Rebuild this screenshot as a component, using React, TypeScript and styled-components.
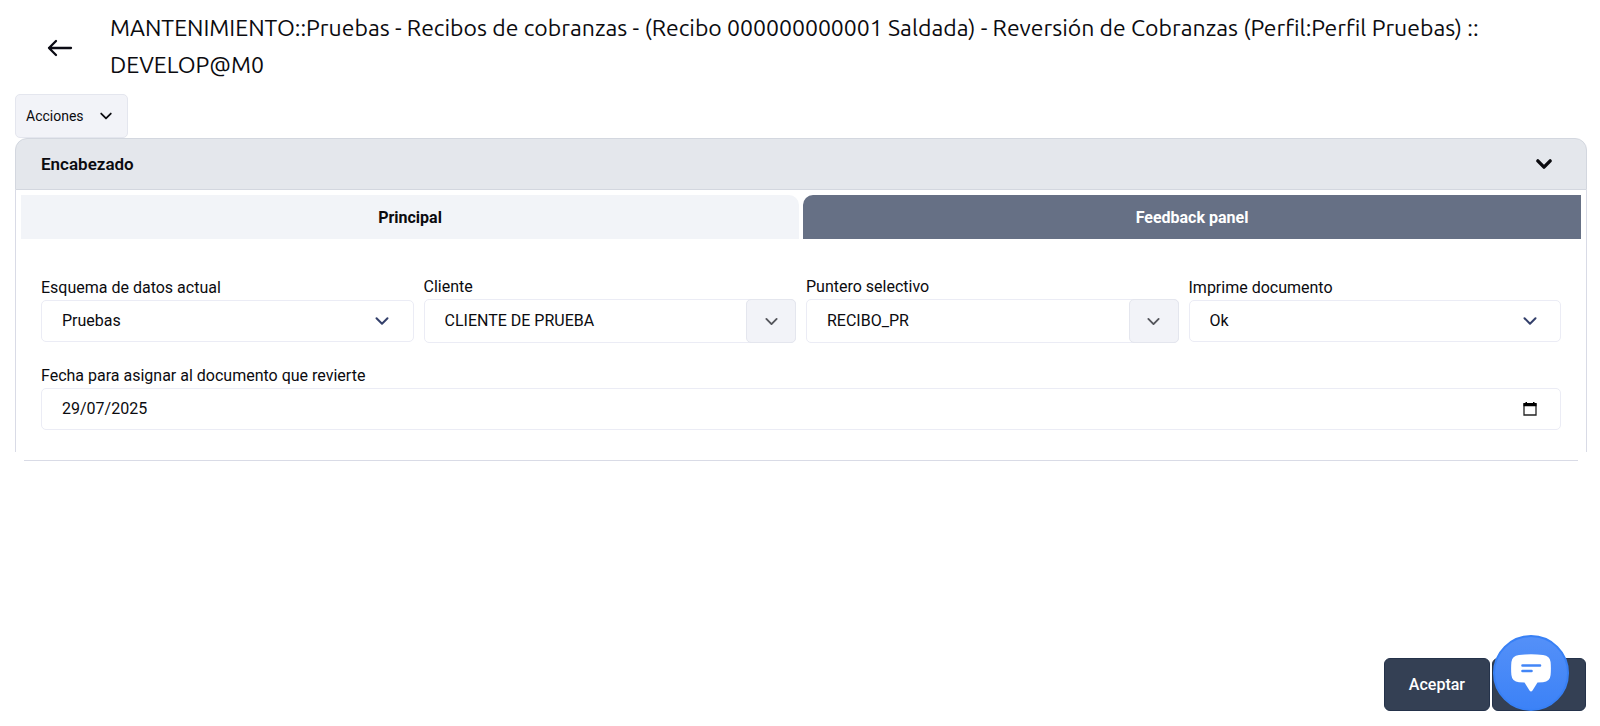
import React, { useState } from "react";
import styled, { createGlobalStyle } from "styled-components";

const GlobalStyle = createGlobalStyle`
  *, *::before, *::after { box-sizing: border-box; }
  body {
    margin: 0;
    background: #ffffff;
    color: #0b0b0f;
    font-family: Roboto, "Liberation Sans", sans-serif;
    font-size: 16px;
    line-height: 24px;
  }
  button, input, select { font: inherit; color: inherit; }
  button { cursor: pointer; }
  svg { display: block; }
`;

const Page = styled.div`
  display: flex;
  flex-direction: column;
  min-height: 100vh;
  padding: 9px 13px 15px 15px;
`;

const Header = styled.header`
  display: flex;
  align-items: center;
  gap: 32px;
  padding: 0 16px 0 27px;
`;

const BackButton = styled.button`
  flex: none;
  width: 36px;
  height: 36px;
  padding: 3px 3px 0;
  border: 0;
  background: transparent;
`;

const Title = styled.h1`
  margin: 0;
  font-family: Ubuntu, "Noto Sans", sans-serif;
  font-size: 23px;
  font-weight: 400;
  line-height: 37px;
`;

const ActionsButton = styled.button`
  display: flex;
  align-items: center;
  align-self: flex-start;
  gap: 15px;
  height: 44px;
  margin-top: 11px;
  padding: 0 14px 0 10px;
  border: 1px solid #e4e6ee;
  border-radius: 5px;
  background: #f2f3f8;
  font-size: 14px;
`;

const PanelHeader = styled.button`
  display: flex;
  align-items: center;
  justify-content: space-between;
  width: 100%;
  height: 52px;
  padding: 0 33px 0 25px;
  border: 1px solid #d3d7df;
  border-radius: 12px 12px 0 0;
  background: #e4e7ec;
  font-size: 17px;
  font-weight: 600;
`;

const PanelBody = styled.div`
  padding: 5px 5px 22px;
  border: solid #d9dbe6;
  border-width: 0 1px;
`;

const PanelEdge = styled.div`
  height: 9px;
  margin: 0 9px;
  border-bottom: 1px solid #d9dbe6;
`;

const TabList = styled.div`
  display: grid;
  grid-template-columns: 1fr 1fr;
  gap: 4px;
`;

const Tab = styled.button<{ $dark?: boolean }>`
  height: 44px;
  padding: 1px 0 0;
  border: 0;
  border-radius: ${(p) => (p.$dark ? "10px 0 0 0" : "0 10px 0 0")};
  background: ${(p) => (p.$dark ? "#667085" : "#f2f4f8")};
  color: ${(p) => (p.$dark ? "#ffffff" : "#0b0b0f")};
  font-weight: 700;
`;

const Fields = styled.div`
  display: grid;
  grid-template-columns: repeat(4, minmax(0, 1fr));
  align-items: center;
  gap: 21px 10px;
  padding: 36px 20px 0;
`;

const Field = styled.div<{ $wide?: boolean }>`
  display: flex;
  flex-direction: column;
  grid-column: ${(p) => (p.$wide ? "1 / -1" : "auto")};
`;

const Control = styled.div<{ $combo?: boolean }>`
  display: grid;
  grid-template-columns: minmax(0, 1fr) ${(p) => (p.$combo ? "49px" : "61px")};
  height: ${(p) => (p.$combo ? 44 : 42)}px;
  border: 1px solid #ebecf5;
  border-radius: 5px;
  background: #ffffff;
`;

const TextInput = styled.input`
  width: 100%;
  padding: 0 0 1px 20px;
  border: 0;
  outline: 0;
  background: transparent;
`;

const Select = styled.select`
  grid-area: 1 / 1 / 2 / 3;
  width: 100%;
  padding: 0 20px 1px;
  border: 0;
  outline: 0;
  appearance: none;
  background: transparent;
`;

const SelectMark = styled.span`
  display: grid;
  grid-area: 1 / 2 / 2 / 3;
  place-items: center;
  color: #34406b;
  pointer-events: none;
`;

const ComboButton = styled.button`
  display: grid;
  place-items: center;
  margin: -1px -1px -1px 0;
  border: 1px solid #e4e6ee;
  border-radius: 5px;
  background: #f2f3f8;
  color: #55565c;
`;

const DateButton = styled.button`
  display: grid;
  place-items: center;
  border: 0;
  background: transparent;
`;

const Footer = styled.footer`
  display: flex;
  justify-content: flex-end;
  gap: 2px;
  margin-top: auto;
  padding: 24px 1px 0 0;
`;

const FooterButton = styled.button`
  min-width: 94px;
  height: 53px;
  padding: 0 24px;
  border: 1px solid #24324a;
  border-radius: 6px;
  background: #344054;
  color: #ffffff;
  font-weight: 500;
`;

const ChatButton = styled.button`
  position: fixed;
  right: 31px;
  bottom: 15px;
  display: grid;
  place-items: center;
  width: 76px;
  height: 76px;
  padding: 0;
  border: 2px solid #3880f5;
  border-radius: 50%;
  background: linear-gradient(#5490f8, #3c82f7);
`;

function Chevron({ size, weight = 2 }: { size: number; weight?: number }) {
  return (
    <svg width={size} height={size} viewBox="0 0 16 16" fill="none" stroke="currentColor"
      strokeWidth={weight} strokeLinecap="round" strokeLinejoin="round" aria-hidden="true">
      <path d="M2.5 5.2 8 10.8l5.5-5.6" />
    </svg>
  );
}

function SelectField({ id, label, value }: { id: string; label: string; value: string }) {
  return (
    <Field>
      <label htmlFor={id}>{label}</label>
      <Control>
        <Select id={id} defaultValue={value}>
          <option>{value}</option>
        </Select>
        <SelectMark><Chevron size={16} /></SelectMark>
      </Control>
    </Field>
  );
}

function ComboField({ id, label, value }: { id: string; label: string; value: string }) {
  return (
    <Field>
      <label htmlFor={id}>{label}</label>
      <Control $combo>
        <TextInput id={id} defaultValue={value} />
        <ComboButton type="button" aria-label={label}><Chevron size={15} /></ComboButton>
      </Control>
    </Field>
  );
}

export default function App() {
  const [open, setOpen] = useState(true);

  return (
    <>
      <GlobalStyle />
      <Page>
        <Header>
          <BackButton type="button" aria-label="Volver">
            <svg width="30" height="30" viewBox="0 0 30 30" fill="none" stroke="#0b0b14"
              strokeWidth="2.3" strokeLinecap="round" strokeLinejoin="round">
              <path d="M26 15H4M11 8l-7 7 7 7" />
            </svg>
          </BackButton>
          <Title>
            MANTENIMIENTO::Pruebas - Recibos de cobranzas - (Recibo 000000000001 Saldada) - Reversión de
            Cobranzas (Perfil:Perfil Pruebas) :: DEVELOP@M0
          </Title>
        </Header>

        <ActionsButton type="button">
          Acciones
          <Chevron size={14} />
        </ActionsButton>

        <section>
          <PanelHeader type="button" aria-expanded={open} onClick={() => setOpen(!open)}>
            Encabezado
            <Chevron size={18} weight={3} />
          </PanelHeader>
          {open && (
            <PanelBody>
              <TabList role="tablist">
                <Tab type="button" role="tab" aria-selected="true">Principal</Tab>
                <Tab type="button" role="tab" aria-selected="false" $dark>Feedback panel</Tab>
              </TabList>
              <Fields>
                <SelectField id="esquema" label="Esquema de datos actual" value="Pruebas" />
                <ComboField id="cliente" label="Cliente" value="CLIENTE DE PRUEBA" />
                <ComboField id="puntero" label="Puntero selectivo" value="RECIBO_PR" />
                <SelectField id="imprime" label="Imprime documento" value="Ok" />
                <Field $wide>
                  <label htmlFor="fecha">Fecha para asignar al documento que revierte</label>
                  <Control>
                    <TextInput id="fecha" inputMode="numeric" defaultValue="29/07/2025" />
                    <DateButton type="button" aria-label="Calendario">
                      <svg width="14" height="16" viewBox="0 0 14 16" aria-hidden="true">
                        <path d="M1 3h12v11H1z" fill="none" stroke="#222" strokeWidth="1.3" />
                        <path d="M0.5 2h13v3.2H0.5zM2.5 1h1.5v2H2.5zM10 1h1.5v2H10z" fill="#000" />
                      </svg>
                    </DateButton>
                  </Control>
                </Field>
              </Fields>
            </PanelBody>
          )}
          <PanelEdge />
        </section>

        <Footer>
          <FooterButton type="button">Aceptar</FooterButton>
          <FooterButton type="button" aria-label="Cerrar" />
        </Footer>

        <ChatButton type="button" aria-label="Chat">
          <svg width="40" height="40" viewBox="0 0 40 40" aria-hidden="true">
            <path d="M8 2Q20 0.6 32 2Q39 2.8 39.6 9Q40.2 15.5 39.6 22Q39 28.6 32 29.2L26.5 29.6L21.5 37.5Q20 39.4 18.5 37.5L13.5 29.6L8 29.2Q1 28.6 0.4 22Q-0.2 15.5 0.4 9Q1 2.8 8 2Z" fill="#fff" />
            <path d="M11.5 12.5H29M11.5 18H20.5" stroke="#4386f7" strokeWidth="2.6" strokeLinecap="round" />
          </svg>
        </ChatButton>
      </Page>
    </>
  );
}
